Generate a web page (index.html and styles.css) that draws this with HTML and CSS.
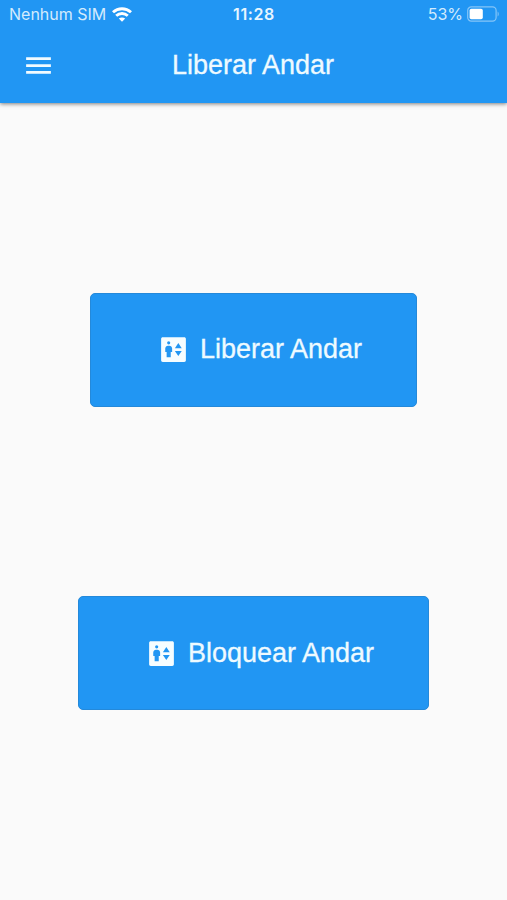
FILE: index.html
```html
<!DOCTYPE html>
<html lang="pt-BR">

<head>
    <meta charset="UTF-8">
    <meta name="viewport" content="width=device-width, initial-scale=1.0">
    <title>Liberar Andar</title>
    <link rel="stylesheet" href="styles.css">
</head>

<body>
    <header class="app-header">
        <div class="status-bar">
            <div class="status-left">
                <span class="carrier">Nenhum SIM</span>
                <svg class="wifi-icon" viewBox="0 0 20 15">
                    <path d="M1 5.2C6.1.5 13.9.5 19 5.2" />
                    <path d="M4.2 8.8c3.3-3 8.3-3 11.6 0" />
                    <path class="wifi-dot" d="M10 14.8l3.2-3.2c-1.8-1.6-4.6-1.6-6.4 0z" />
                </svg>
            </div>
            <span class="clock">11:28</span>
            <div class="status-right">
                <span class="battery-text">53%</span>
                <svg class="battery-icon" viewBox="0 0 32 16">
                    <rect class="battery-case" x=".7" y=".9" width="28.4" height="14.2" rx="3.6" />
                    <rect x="2.6" y="2.7" width="13.2" height="10.6" rx="1.8" />
                    <path class="battery-tip" d="M30.6 5.6c1.5.8 1.5 4 0 4.8z" />
                </svg>
            </div>
        </div>
        <div class="toolbar">
            <button type="button" class="menu-btn" aria-label="Menu">
                <svg class="menu-icon" viewBox="0 0 24 24">
                    <path d="M3 18h18v-2H3v2zm0-5h18v-2H3v2zm0-7v2h18V6H3z" />
                </svg>
            </button>
            <h1>Liberar Andar</h1>
        </div>
    </header>

    <main class="container">
        <button type="button" class="floor-btn">
            <svg class="elevator-icon" viewBox="0 0 24 24">
                <path fill-rule="evenodd" d="M19.8 3H4.2C3.5 3 3 3.5 3 4.2v15.6c0 .7.5 1.2 1.2 1.2h15.6c.7 0 1.2-.5 1.2-1.2V4.2c0-.7-.5-1.2-1.2-1.2zM8.5 6a1.15 1.15 0 1 1 0 2.3 1.15 1.15 0 0 1 0-2.3zM11 13.8h-1v3.9H7v-3.9H6v-2.6c0-1.1.9-2 2-2h1c1.1 0 2 .9 2 2v2.6zM15.5 16.8L13 13.1h5l-2.5 3.7zM13 11l2.5-3.7L18 11h-5z" />
            </svg>
            <span>Liberar Andar</span>
        </button>
        <button type="button" class="floor-btn">
            <svg class="elevator-icon" viewBox="0 0 24 24">
                <path fill-rule="evenodd" d="M19.8 3H4.2C3.5 3 3 3.5 3 4.2v15.6c0 .7.5 1.2 1.2 1.2h15.6c.7 0 1.2-.5 1.2-1.2V4.2c0-.7-.5-1.2-1.2-1.2zM8.5 6a1.15 1.15 0 1 1 0 2.3 1.15 1.15 0 0 1 0-2.3zM11 13.8h-1v3.9H7v-3.9H6v-2.6c0-1.1.9-2 2-2h1c1.1 0 2 .9 2 2v2.6zM15.5 16.8L13 13.1h5l-2.5 3.7zM13 11l2.5-3.7L18 11h-5z" />
            </svg>
            <span>Bloquear Andar</span>
        </button>
    </main>
</body>

</html>
```
FILE: styles.css
```css
* {
    box-sizing: border-box;
}

body {
    font-family: "Liberation Sans", Arial, sans-serif;
    margin: 0;
    height: 100vh;
    display: flex;
    flex-direction: column;
    background-color: #fafafa;
    color: #ffffff;
}

.app-header {
    height: 103px;
    flex-shrink: 0;
    background-color: #2196f3;
    /* Material Blue */
    box-shadow: 0 1px 4px rgba(0, 0, 0, 0.5);
}

/* Status bar */
.status-bar {
    display: grid;
    grid-template-columns: 1fr auto 1fr;
    align-items: center;
    height: 28px;
    padding: 0 8px 0 9px;
    font-family: Inter, sans-serif;
    font-size: 16px;
}

.status-left,
.status-right {
    display: flex;
    align-items: center;
    color: #d3ebfd;
}

.status-left {
    gap: 6px;
}

.status-right {
    justify-content: flex-end;
    gap: 4px;
}

.clock {
    font-weight: 600;
    letter-spacing: 0.6px;
    color: #e6f5ff;
}

.wifi-icon {
    width: 20px;
    height: 15px;
    fill: none;
    stroke: #ffffff;
    stroke-width: 2.9;
}

.wifi-dot {
    fill: #ffffff;
    stroke: none;
}

.battery-icon {
    width: 32px;
    height: 16px;
    fill: #ffffff;
}

.battery-case {
    fill: none;
    stroke: #85c5f8;
    stroke-width: 1.2;
}

.battery-tip {
    fill: #85c5f8;
}

/* Toolbar */
.toolbar {
    display: grid;
    grid-template-columns: 77px 1fr 78px;
    align-items: center;
    height: 75px;
}

.menu-btn {
    display: flex;
    justify-content: center;
    padding: 0;
    border: none;
    background: none;
    cursor: pointer;
}

.menu-icon {
    width: 33px;
    height: 33px;
    fill: #f2fbff;
}

h1 {
    margin: 0;
    font-size: 27px;
    font-weight: normal;
    text-align: center;
    color: #eefaff;
    -webkit-text-stroke: 0.3px #eefaff;
}

/* Buttons */
.container {
    flex: 1;
    display: flex;
    flex-direction: column;
    align-items: center;
    justify-content: space-evenly;
}

.floor-btn {
    display: flex;
    align-items: center;
    gap: 10px;
    height: 114px;
    padding: 0 54px 0 66px;
    border: 1px solid #2489da;
    border-radius: 5px;
    background-color: #2196f3;
    color: #eefaff;
    font-family: inherit;
    font-size: 27px;
    -webkit-text-stroke: 0.3px #eefaff;
    cursor: pointer;
}

.elevator-icon {
    width: 33px;
    height: 33px;
    fill: #f6fdff;
}
```
